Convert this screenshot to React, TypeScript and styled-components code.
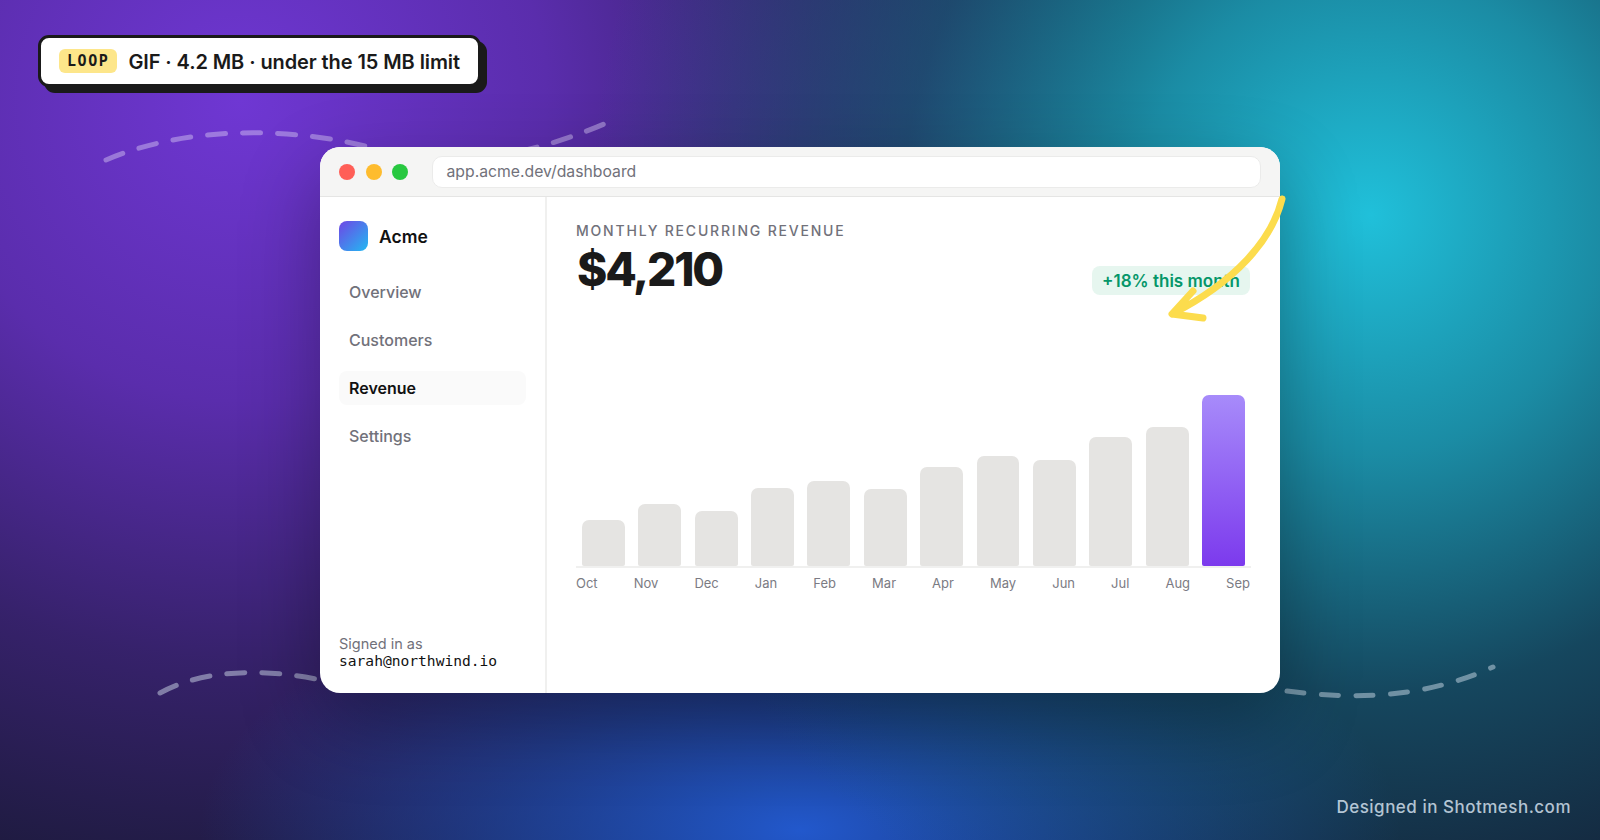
import { createGlobalStyle, styled } from "styled-components";

const GlobalStyle = createGlobalStyle`
  html, body {
    margin: 0;
    padding: 0;
    background: #14182e;
  }
  * {
    box-sizing: border-box;
  }
`;

const Page = styled.div`
  position: relative;
  width: 1600px;
  height: 840px;
  overflow: hidden;
  display: flex;
  align-items: center;
  justify-content: center;
  font-family: Inter, "Liberation Sans", sans-serif;
  background:
    radial-gradient(ellipse 780px 800px at 1370px 215px, #20c0da 0%, rgba(28, 160, 185, 0.85) 30%, rgba(22, 110, 135, 0.54) 60%, rgba(20, 100, 125, 0) 100%),
    radial-gradient(ellipse 600px 270px at 800px 830px, #2258cc 0%, rgba(30, 75, 170, 0.65) 50%, rgba(30, 75, 170, 0) 100%),
    radial-gradient(ellipse 900px 880px at 240px 100px, #6f37d3 0%, rgba(100, 48, 190, 0.88) 34%, rgba(70, 38, 135, 0.68) 64%, rgba(70, 38, 135, 0) 100%),
    #14182e;
`;

const Squiggles = styled.svg`
  position: absolute;
  inset: 0;
`;

const ArrowMark = styled.svg`
  position: absolute;
  inset: 0;
  z-index: 2;
  pointer-events: none;
`;

const Callout = styled.div`
  position: absolute;
  left: 38px;
  top: 35px;
  width: 443px;
  height: 52px;
  display: flex;
  align-items: center;
  gap: 11px;
  padding: 1px 18px 0;
  background: #fff;
  border: 3px solid #1a1a1a;
  border-radius: 11px;
  box-shadow: 6px 6px 0 #1a1a1a;
  color: #1a1a1a;
  font-size: 20px;
  font-weight: 600;
  letter-spacing: -0.09px;
  white-space: nowrap;
`;

const Tag = styled.span`
  display: flex;
  align-items: center;
  justify-content: center;
  width: 59px;
  height: 24px;
  margin-top: -1px;
  border-radius: 6px;
  background: #fde68a;
  font-family: "DejaVu Sans Mono", monospace;
  font-size: 15px;
  font-weight: 700;
  letter-spacing: 1.6px;
`;

const Watermark = styled.div`
  position: absolute;
  right: 29px;
  bottom: 23px;
  color: rgba(225, 238, 250, 0.78);
  font-size: 17px;
  font-weight: 500;
  letter-spacing: 0.5px;
`;

const Window = styled.div`
  position: relative;
  z-index: 1;
  width: 960px;
  height: 546px;
  display: flex;
  flex-direction: column;
  background: #fff;
  border-radius: 20px;
  overflow: hidden;
  box-shadow: 0 30px 80px rgba(0, 0, 0, 0.3);
`;

const TitleBar = styled.div`
  height: 50px;
  flex: none;
  display: flex;
  align-items: center;
  gap: 10.5px;
  padding: 0 19px 0 19px;
  background: #f5f5f4;
  border-bottom: 1px solid #e5e5e4;
`;

const Light = styled.span<{ $color: string }>`
  width: 16px;
  height: 16px;
  flex: none;
  border-radius: 50%;
  background: ${(props) => props.$color};
`;

const AddressBar = styled.div`
  flex: 1;
  height: 32px;
  margin-left: 13px;
  display: flex;
  align-items: center;
  padding: 0 14px;
  background: #fff;
  border: 1px solid #ebebea;
  border-radius: 10px;
  color: #71717a;
  font-size: 15.75px;
`;

const Body = styled.div`
  flex: 1;
  display: flex;
  min-height: 0;
`;

const Sidebar = styled.aside`
  width: 227px;
  flex: none;
  display: flex;
  flex-direction: column;
  padding: 24px 19px 24px 19px;
  border-right: 2px solid #f0f0ef;
`;

const Brand = styled.div`
  display: flex;
  align-items: center;
  gap: 11px;
  margin-bottom: 24px;
  color: #111;
  font-size: 17.5px;
  font-weight: 600;
`;

const BrandMark = styled.span`
  width: 29px;
  height: 30px;
  border-radius: 8px;
  background: linear-gradient(135deg, #6f46e5, #22b9f2);
`;

const NavList = styled.nav`
  display: flex;
  flex-direction: column;
  gap: 14px;
`;

const NavItem = styled.div<{ $active?: boolean }>`
  height: 34px;
  display: flex;
  align-items: center;
  padding: 0 10px;
  border-radius: 8px;
  background: ${(props) => (props.$active ? "#fafafa" : "transparent")};
  color: ${(props) => (props.$active ? "#111" : "#71717a")};
  font-size: 16px;
  font-weight: ${(props) => (props.$active ? 600 : 500)};
`;

const Account = styled.div`
  margin-top: auto;
  color: #71717a;
  font-size: 14.5px;
  line-height: 17px;
`;

const Email = styled.div`
  color: #111;
  font-family: "DejaVu Sans Mono", monospace;
  font-size: 14.6px;
`;

const Main = styled.main`
  flex: 1;
  display: flex;
  flex-direction: column;
  padding: 25px 29px 0 29px;
`;

const Eyebrow = styled.div`
  color: #71717a;
  font-size: 14px;
  font-weight: 500;
  letter-spacing: 1.8px;
  line-height: 17px;
`;

const HeadRow = styled.div`
  display: flex;
  align-items: flex-end;
  justify-content: space-between;
  margin-top: 1px;
`;

const Amount = styled.div`
  margin-left: 1px;
  color: #1a1a1a;
  font-size: 46px;
  font-weight: 800;
  letter-spacing: -2.2px;
  line-height: 58px;
`;

const Delta = styled.div`
  height: 29px;
  display: flex;
  align-items: center;
  padding: 0 10px;
  margin-right: 1px;
  border-radius: 8px;
  background: #e6f6ef;
  color: #059669;
  font-size: 17px;
  font-weight: 600;
  transform: translateY(-3px);
`;

const Bars = styled.div`
  height: 190px;
  margin-top: 80px;
  display: flex;
  align-items: flex-end;
  gap: 13.4px;
  padding: 0 6px;
  border-bottom: 2px solid #f0f0ef;
`;

const Bar = styled.div<{ $hot?: boolean }>`
  flex: 1;
  border-radius: 7px 7px 2px 2px;
  background: ${(props) =>
    props.$hot ? "linear-gradient(180deg, #a78bfa, #7c3aed)" : "#e5e4e2"};
`;

const Months = styled.div`
  display: flex;
  justify-content: space-between;
  margin-top: 7px;
  padding-right: 1px;
  color: #7b7b83;
  font-size: 13px;
`;

const series = [
  { month: "Oct", height: 46 },
  { month: "Nov", height: 62 },
  { month: "Dec", height: 55 },
  { month: "Jan", height: 78 },
  { month: "Feb", height: 85 },
  { month: "Mar", height: 77 },
  { month: "Apr", height: 99 },
  { month: "May", height: 110 },
  { month: "Jun", height: 106 },
  { month: "Jul", height: 129 },
  { month: "Aug", height: 139 },
  { month: "Sep", height: 171 },
];

const navItems = ["Overview", "Customers", "Revenue", "Settings"];

export default function App() {
  return (
    <>
      <GlobalStyle />
      <Page>
        <Squiggles width="1600" height="840" viewBox="0 0 1600 840" fill="none">
          <path
            d="M106 160 C 190 124, 300 127, 380 150 C 440 168, 520 160, 604 124"
            stroke="#d9cdf5"
            strokeOpacity="0.45"
            strokeWidth="5"
            strokeLinecap="round"
            strokeDasharray="18 17"
          />
          <path
            d="M160 693 C 205 668, 270 668, 330 682"
            stroke="#d5e2ee"
            strokeOpacity="0.48"
            strokeWidth="5"
            strokeLinecap="round"
            strokeDasharray="18 17"
          />
          <path
            d="M1287 691 C 1355 700, 1425 698, 1493 667"
            stroke="#d5e2ee"
            strokeOpacity="0.48"
            strokeWidth="5"
            strokeLinecap="round"
            strokeDasharray="17 17.6"
          />
        </Squiggles>

        <Callout>
          <Tag>LOOP</Tag>
          GIF · 4.2 MB · under the 15 MB limit
        </Callout>

        <Window>
          <TitleBar>
            <Light $color="#ff5f57" />
            <Light $color="#febc2e" />
            <Light $color="#28c840" />
            <AddressBar>app.acme.dev/dashboard</AddressBar>
          </TitleBar>
          <Body>
            <Sidebar>
              <Brand>
                <BrandMark />
                Acme
              </Brand>
              <NavList>
                {navItems.map((item) => (
                  <NavItem key={item} $active={item === "Revenue"}>
                    {item}
                  </NavItem>
                ))}
              </NavList>
              <Account>
                Signed in as
                <Email>sarah@northwind.io</Email>
              </Account>
            </Sidebar>
            <Main>
              <Eyebrow>MONTHLY RECURRING REVENUE</Eyebrow>
              <HeadRow>
                <Amount>$4,210</Amount>
                <Delta>+18% this month</Delta>
              </HeadRow>
              <Bars>
                {series.map((d) => (
                  <Bar
                    key={d.month}
                    $hot={d.month === "Sep"}
                    style={{ height: d.height }}
                  />
                ))}
              </Bars>
              <Months>
                {series.map((d) => (
                  <span key={d.month}>{d.month}</span>
                ))}
              </Months>
            </Main>
          </Body>
        </Window>

        <ArrowMark width="1600" height="840" viewBox="0 0 1600 840" fill="none">
          <path
            d="M1282 199 C 1272 240, 1235 282, 1172 314 M1193 291 L1172 314 L1203 318"
            stroke="#fcdc4d"
            strokeWidth="7"
            strokeLinecap="round"
            strokeLinejoin="round"
          />
        </ArrowMark>

        <Watermark>Designed in Shotmesh.com</Watermark>
      </Page>
    </>
  );
}
